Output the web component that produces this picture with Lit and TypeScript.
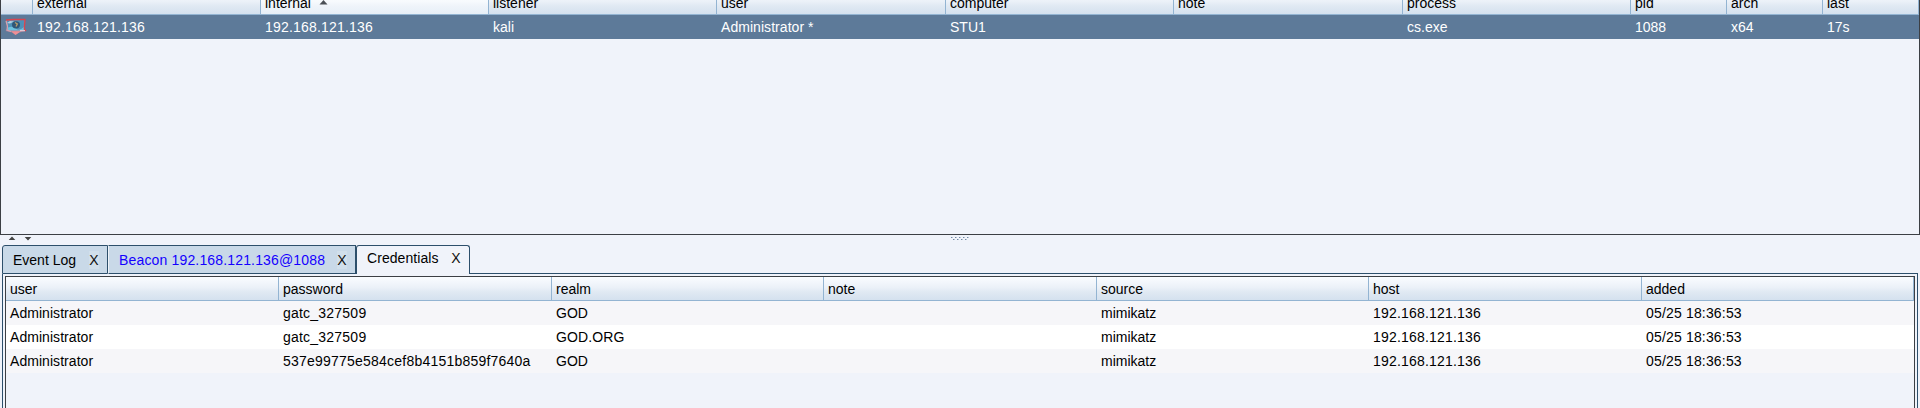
import { LitElement, html, css, svg, nothing } from "lit";
import { customElement, property } from "lit/decorators.js";

type Cell = { text: string; spacing?: number };

const IP: Cell = { text: "192.168.121.136", spacing: 0.19 };
const c = (text: string, spacing = 0): Cell => ({ text, spacing });

const base = css`
  * { box-sizing: border-box; }
  :host {
    display: block;
    font-family: "Liberation Sans", Arial, sans-serif;
    font-size: 14px;
    color: #000;
  }
`;

@customElement("data-table")
class DataTable extends LitElement {
  @property({ attribute: false }) columns: Cell[] = [];
  @property({ attribute: false }) rows: (Cell | null)[][] = [];
  @property({ attribute: false }) widths: number[] = [];
  @property({ type: Number }) sorted = -1;
  @property({ type: Boolean, reflect: true }) selected = false;

  static styles = [base, css`
    .line { display: grid; height: 24px; }
    .head { border-bottom: 1px solid #93b4d2; }
    .cell {
      display: flex;
      align-items: center;
      padding: 0 0 0 4px;
      line-height: 16px;
      white-space: pre;
      overflow: hidden;
    }
    .head .cell {
      border-right: 1px solid #93b4d2;
      background: linear-gradient(#fafcff 0%, #ebf1f8 45%, #e0e9f3 65%, #d4e1ef 100%);
    }
    .head .sorted { background: linear-gradient(#fff 0%, #f7fafd 45%, #eff4fa 65%, #e7eff7 100%); }
    .sort { margin-left: 8px; margin-top: -1px; display: block; }
    .body:nth-child(even) { background: #f6f6f9; }
    .body:nth-child(odd) { background: #fff; }
    :host([selected]) .body { background: #5d7a99; color: #fff; }
    .body .pic { padding-left: 4px; }
  `];

  render() {
    const cols = this.widths.map((w) => `${w}px`).join(" ");
    return html`
      <div class="line head" style="grid-template-columns:${cols}">
        ${this.columns.map((col, i) => html`<div class="cell ${i === this.sorted ? "sorted" : ""}"><span style="letter-spacing:${col.spacing ?? 0}px">${col.text}</span>${i === this.sorted
          ? html`<svg class="sort" width="9" height="5" viewBox="0 0 9 5"><path d="M4.5 0L8.5 4.5H.5Z" fill="#4a4f55"/></svg>` : nothing}</div>`)}
      </div>
      ${this.rows.map((row) => html`<div class="line body" style="grid-template-columns:${cols}">
        ${row.map((cell) => cell === null
          ? html`<div class="cell pic">${computerIcon}</div>`
          : html`<div class="cell"><span style="letter-spacing:${cell.spacing ?? 0}px">${cell.text}</span></div>`)}
      </div>`)}
    `;
  }
}

const computerIcon = html`<svg width="22" height="18" viewBox="0 0 22 18">
  ${svg`
    <path d="M1 2L20 1L19.5 11L21.5 13L14 14.5L10.5 17L7 14.5L.5 13L2 11Z" fill="#a8809a"/>
    <path d="M2 2.5L19 2L18.5 11.5L3 12Z" fill="#4d91b8"/>
    <path d="M3 9.5Q8 7.5 11 10.5T19 9V12.5H3Z" fill="#6dc2df"/>
    <path d="M1 2L8 1.5L20 1.5L19.3 11L21 13" fill="none" stroke="#d8454f" stroke-width="1.3"/>
    <path d="M1 3L2.5 8L2 12L6 13.5" fill="none" stroke="#d2a3b1" stroke-width="1.2"/>
    <path d="M2 5L5 3L9 3.5L5 5.5Z" fill="#b5cfe0"/>
    <ellipse cx="11" cy="6.8" rx="4" ry="3.6" fill="#2f5677"/>
    <path d="M10 4.5L12.3 6L11 8.5" fill="none" stroke="#b79c68" stroke-width="1.4"/>
    <path d="M6 13.2L16 13.2L10.5 17Z" fill="#ef8f95"/>
    <path d="M15 12.7H20" stroke="#f3d4da" stroke-width="1"/>`}
</svg>`;

@customElement("tab-strip")
class TabStrip extends LitElement {
  static styles = [base, css`
    .tabs { display: flex; height: 29px; padding-left: 2px; }
    .tab {
      display: flex;
      align-items: center;
      height: 29px;
      border: 1px solid #2d4f6b;
      border-left-width: 0;
      background: #c9d9e8;
      line-height: 16px;
      white-space: pre;
      padding-top: 1px;
    }
    .first { width: 106px; border-left-width: 1px; border-top-left-radius: 3px; padding-left: 10px; }
    .beacon { width: 248px; padding-left: 10px; color: #1400ff; border-left: 1px solid #eef3f9; }
    .active {
      width: 114px;
      border-left-width: 1px;
      border-bottom: 0;
      border-radius: 3px 3px 0 0;
      background: #f0f3fa;
      padding: 0 0 4px 10px;
    }
    .rest { flex: 1; border-bottom: 1px solid #2d4f6b; margin-right: 2px; }
    .close {
      width: 10px;
      height: 18px;
      line-height: 18px;
      text-align: center;
      margin-left: auto;
      margin-right: 8px;
      background: #d1dfeb;
      color: #111;
    }
    .active .close { background: #f3f5f9; }
  `];

  render() {
    return html`<div class="tabs">
      <div class="tab first"><span>Event Log</span><span class="close">X</span></div>
      <div class="tab beacon"><span style="letter-spacing:0.16px">Beacon 192.168.121.136@1088</span><span class="close">X</span></div>
      <div class="tab active"><span style="letter-spacing:0.06px">Credentials</span><span class="close">X</span></div>
      <div class="rest"></div>
    </div>`;
  }
}

@customElement("app-root")
class AppRoot extends LitElement {
  static styles = [base, css`
    :host { height: 408px; overflow: hidden; background: #f0f3fa; }
    .page { display: flex; flex-direction: column; height: 408px; overflow: hidden; }
    .sessions {
      height: 235px;
      border: 1px solid #3c3f44;
      border-top: 0;
      overflow: hidden;
    }
    .sessions data-table { margin-top: -9px; }
    .split { height: 10px; display: block; flex: none; }
    .frame {
      flex: 1;
      margin: 0 2px;
      border: solid #2d4f6b;
      border-width: 0 1px;
      padding: 2px 2px 0;
      display: flex;
      min-height: 0;
    }
    .inner { flex: 1; border: 1px solid #3c3f44; border-bottom: 0; }
  `];

  render() {
    const name = c("Administrator", 0.05);
    const when = c("05/25 18:36:53", 0.17);
    const src = c("mimikatz");
    const pass = c("gatc_327509", 0.22);
    return html`<div class="page">
      <div class="sessions">
        <data-table selected .sorted=${2}
          .widths=${[32, 228, 228, 228, 229, 228, 229, 228, 96, 96, 96]}
          .columns=${["", "external", "internal", "listener", "user", "computer", "note", "process", "pid", "arch", "last"].map((t) => c(t))}
          .rows=${[[null, IP, IP, c("kali"), c("Administrator *", 0.05), c("STU1"), c(""), c("cs.exe"), c("1088"), c("x64"), c("17s")]]}
        ></data-table>
      </div>
      <svg class="split" width="1920" height="10" viewBox="0 0 1920 10">
        <path d="M12 1.6L15.3 5H8.7Z M28 5.4L31.3 2H24.7Z" fill="#444"/>
        ${[951, 955, 959, 963, 967].map((x) => svg`<rect x=${x} y="2" width="1" height="1" fill="#7088a3"/><rect x=${x + 1} y="2" width="1" height="1" fill="#b6c2d2"/>`)}
        ${[953, 957, 961, 965].map((x) => svg`<rect x=${x} y="4" width="1" height="1" fill="#7088a3"/><rect x=${x + 1} y="4" width="1" height="1" fill="#b6c2d2"/>`)}
      </svg>
      <tab-strip></tab-strip>
      <div class="frame"><div class="inner">
        <data-table
          .widths=${[273, 273, 272, 273, 272, 273, 272]}
          .columns=${["user", "password", "realm", "note", "source", "host", "added"].map((t) => c(t))}
          .rows=${[
            [name, pass, c("GOD"), c(""), src, IP, when],
            [name, pass, c("GOD.ORG", 0.1), c(""), src, IP, when],
            [name, c("537e99775e584cef8b4151b859f7640a", 0.22), c("GOD"), c(""), src, IP, when],
          ]}
        ></data-table>
      </div></div>
    </div>`;
  }
}
